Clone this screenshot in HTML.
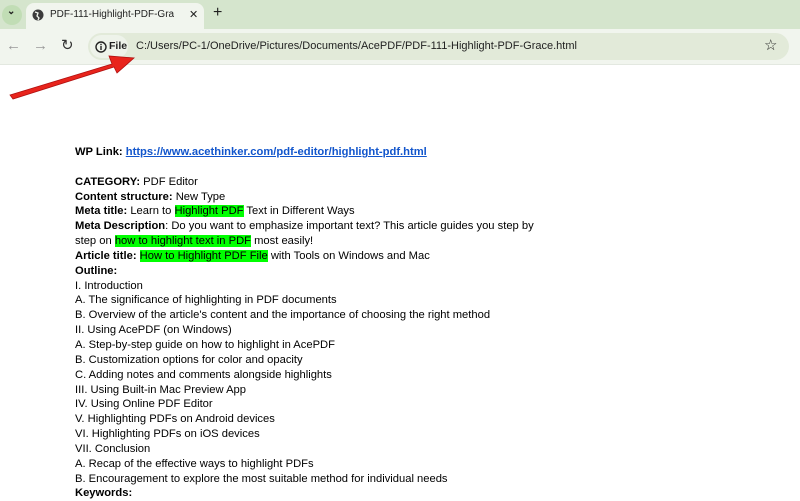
<!DOCTYPE html>
<html><head><meta charset="utf-8"><style>
body{margin:0;width:800px;height:491px;overflow:hidden;background:#fff;font-family:"Liberation Sans",Arial,sans-serif;position:relative}
.tabbar{position:absolute;left:0;top:0;width:800px;height:29px;background:#d5e5cd}
.tab{position:absolute;left:26px;top:3px;width:178px;height:26px;background:#f1f5ee;border-radius:8px 8px 0 0}
.toolbar{position:absolute;left:0;top:29px;width:800px;height:35px;background:#f1f5ee;border-bottom:1px solid #e3e8e0}
.omni{position:absolute;left:88px;top:4px;width:701px;height:27px;background:#e2ead9;border-radius:14px}
.chip{position:absolute;left:2px;top:2px;width:38px;height:23px;background:#eef3ea;border-radius:12px}
.t{position:absolute;font-size:12px;color:#1f1f1f;white-space:nowrap}
.content{position:absolute;left:75px;top:145px;font-size:11.2px;line-height:14.85px;color:#000}
.content div{height:14.85px;white-space:nowrap}
.h{background:#00ff00}
a{color:#1155cc;text-decoration:underline;font-weight:bold}
</style></head><body>
<div class="tabbar">
 <div style="position:absolute;left:2px;top:5px;width:20px;height:20px;border-radius:10px;background:#c1ddb5"></div>
 <div class="t" style="left:7px;top:6px;font-size:10px;font-weight:bold">&#8964;</div>
 <div class="tab">
  <svg style="position:absolute;left:6px;top:6px" width="12" height="12" viewBox="0 0 12 12"><circle cx="6" cy="6" r="5.5" fill="#3c3c3c"/><path d="M3 3 L6 4 L5 7 L7 9 L6 11" stroke="#f1f5ee" stroke-width="1.3" fill="none"/></svg>
  <div class="t" style="left:24px;top:6px;font-size:10px;width:124px;overflow:hidden">PDF-111-Highlight-PDF-Grace.html</div>
  <div class="t" style="left:163px;top:5px;font-size:11px">✕</div>
 </div>
 <div class="t" style="left:213px;top:4px;font-size:16px">+</div>
</div>
<div class="toolbar">
 <div class="t" style="left:6px;top:8px;font-size:15px;color:#999">←</div>
 <div class="t" style="left:33px;top:8px;font-size:15px;color:#999">→</div>
 <div class="t" style="left:61px;top:7px;font-size:15px;color:#333">↻</div>
 <div class="omni">
  <div class="chip"></div>
  <svg style="position:absolute;left:7px;top:8px" width="12" height="12" viewBox="0 0 12 12"><circle cx="6" cy="6" r="5" stroke="#222" stroke-width="1.4" fill="none"/><rect x="5.3" y="5" width="1.4" height="4" fill="#222"/><rect x="5.3" y="2.8" width="1.4" height="1.4" fill="#222"/></svg>
  <div class="t" style="left:21px;top:7px;font-size:10.5px;font-weight:bold">File</div>
  <div class="t" style="left:48px;top:7px;font-size:11px">C:/Users/PC-1/OneDrive/Pictures/Documents/AcePDF/PDF-111-Highlight-PDF-Grace.html</div>
  <div class="t" style="left:676px;top:3px;font-size:15px">☆</div>
 </div>
</div>
<svg style="position:absolute;left:0;top:0" width="200" height="120"><polygon points="10,95 112,64 109,56 134,58 117,73 114,67 13,99" fill="#e8241c" stroke="#b01010" stroke-width="0.8"/></svg>
<div class="content">
<div><b>WP Link: </b><a>https://www.acethinker.com/pdf-editor/highlight-pdf.html</a></div>
<div></div>
<div><b>CATEGORY:</b> PDF Editor</div>
<div><b>Content structure:</b> New Type</div>
<div><b>Meta title:</b> Learn to <span class="h">Highlight PDF</span> Text in Different Ways</div>
<div><b>Meta Description</b>: Do you want to emphasize important text? This article guides you step by</div>
<div>step on <span class="h">how to highlight text in PDF</span> most easily!</div>
<div><b>Article title:</b> <span class="h">How to Highlight PDF File</span> with Tools on Windows and Mac</div>
<div><b>Outline:</b></div>
<div>I. Introduction</div>
<div>A. The significance of highlighting in PDF documents</div>
<div>B. Overview of the article's content and the importance of choosing the right method</div>
<div>II. Using AcePDF (on Windows)</div>
<div>A. Step-by-step guide on how to highlight in AcePDF</div>
<div>B. Customization options for color and opacity</div>
<div>C. Adding notes and comments alongside highlights</div>
<div>III. Using Built-in Mac Preview App</div>
<div>IV. Using Online PDF Editor</div>
<div>V. Highlighting PDFs on Android devices</div>
<div>VI. Highlighting PDFs on iOS devices</div>
<div>VII. Conclusion</div>
<div>A. Recap of the effective ways to highlight PDFs</div>
<div>B. Encouragement to explore the most suitable method for individual needs</div>
<div><b>Keywords:</b></div>
</div>
</body></html>
